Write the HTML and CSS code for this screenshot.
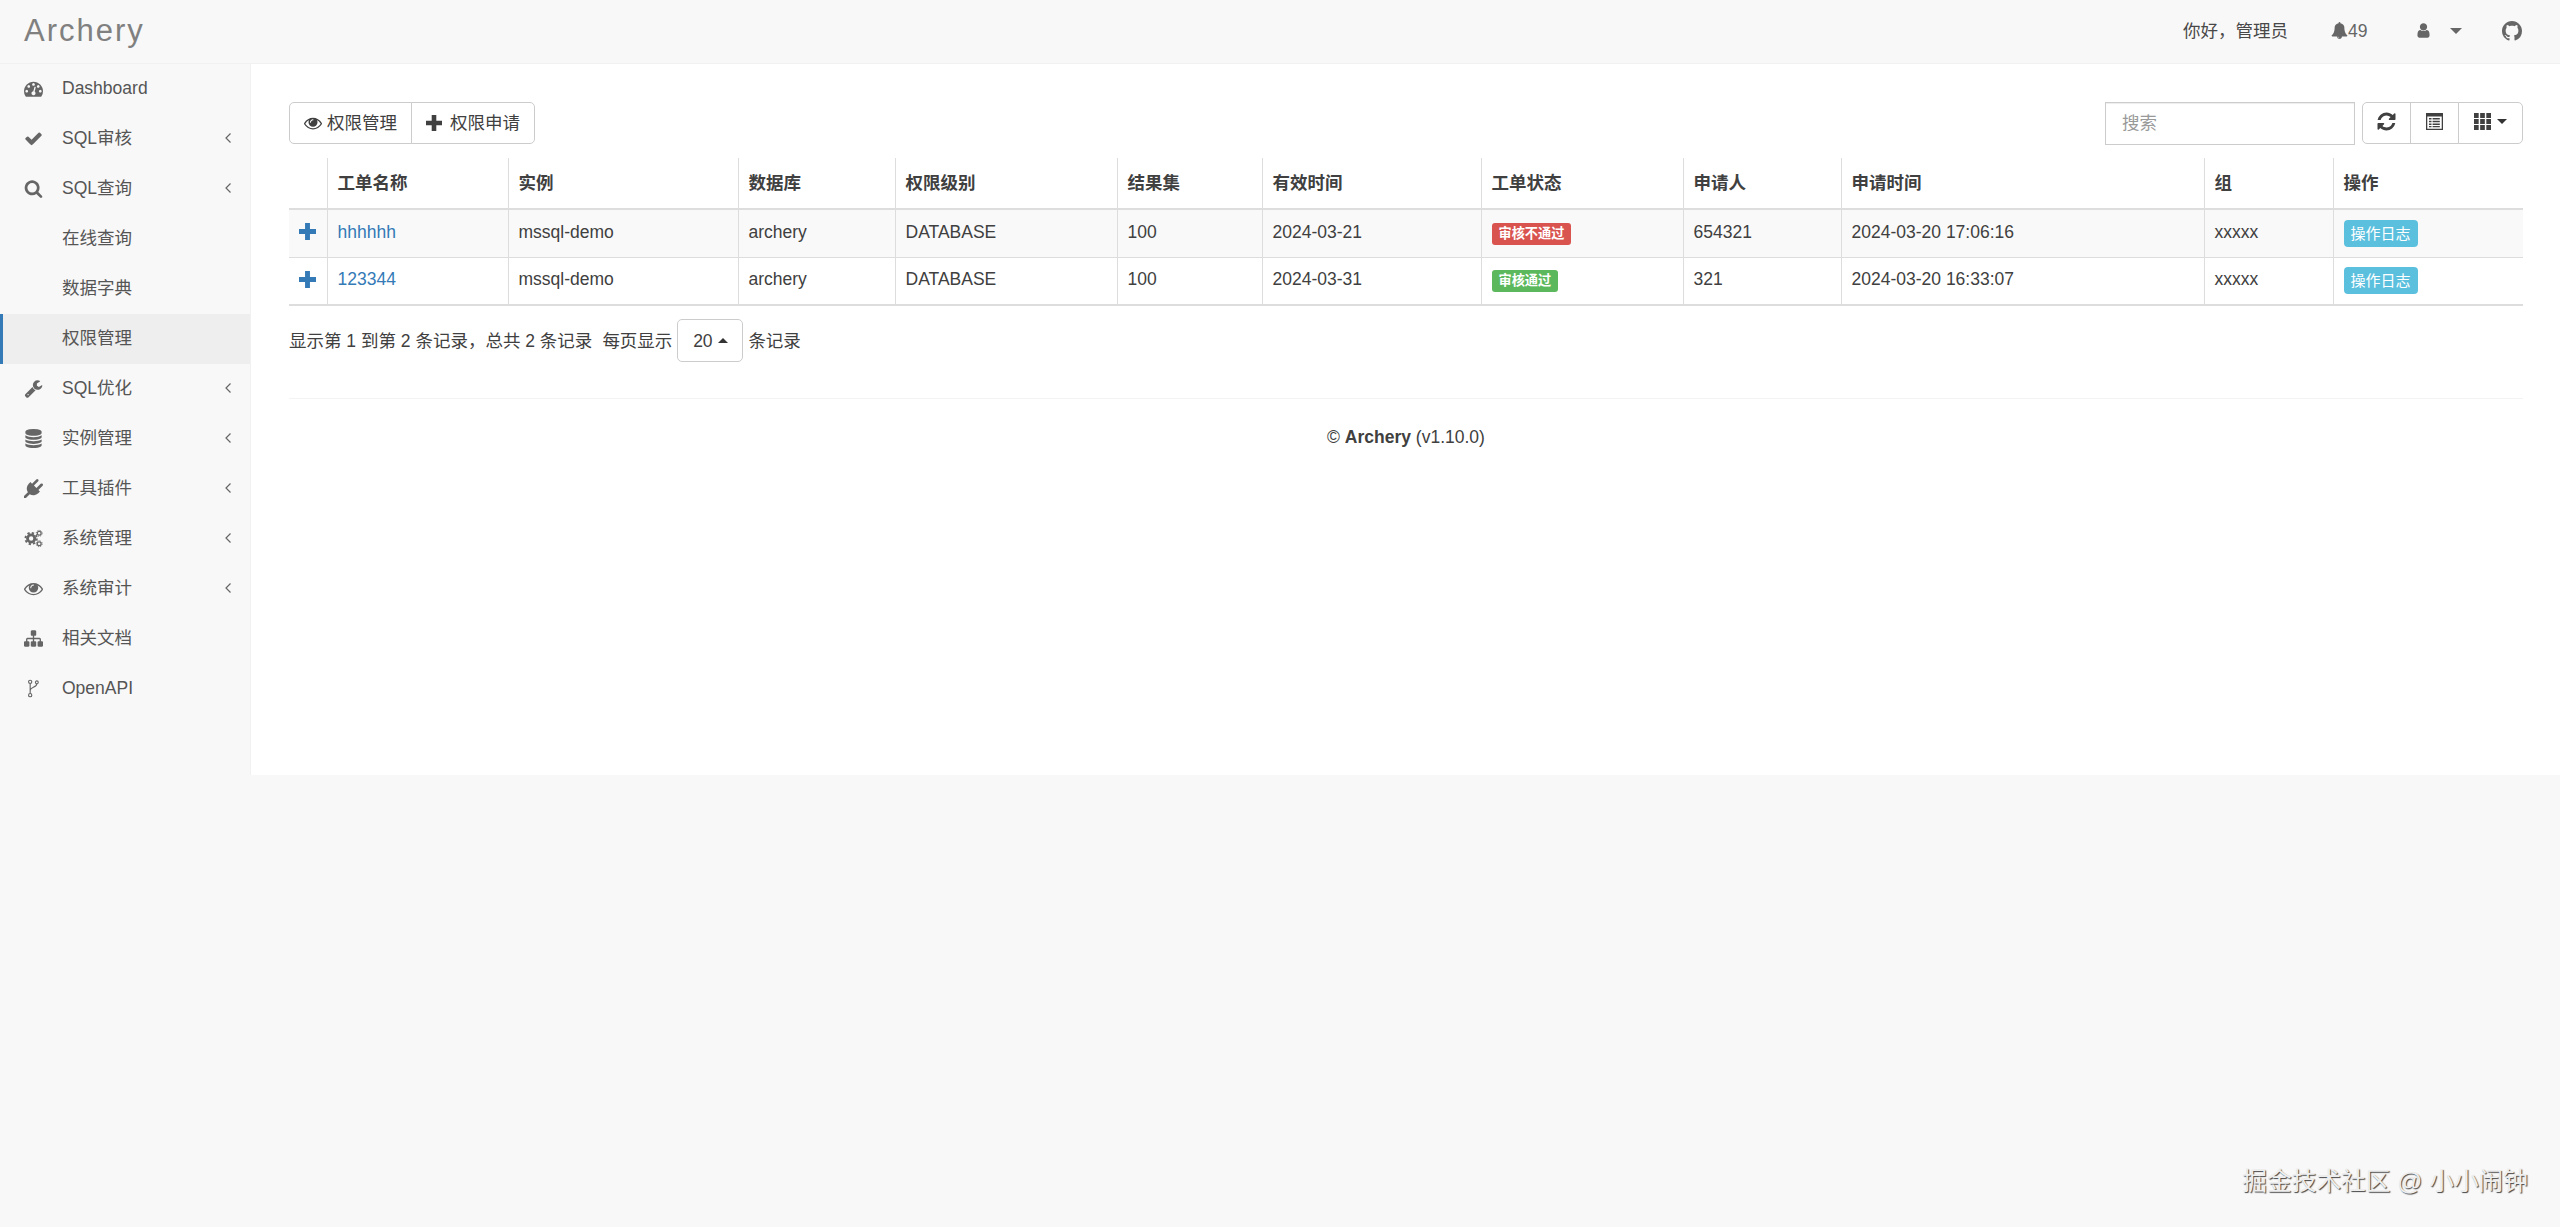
FILE: index.html
```html
<!DOCTYPE html>
<html lang="zh-CN">
<head>
  <meta charset="UTF-8">
  <title>Archery</title>
  <link rel="stylesheet" href="styles.css">
</head>
<body>
  <svg class="sprite" xmlns="http://www.w3.org/2000/svg">
    <symbol id="i-dashboard" viewBox="0 0 1792 1792"><path d="M384 1152q0-53-37.500-90.500t-90.500-37.500-90.500 37.500-37.500 90.500 37.500 90.500 90.500 37.500 90.500-37.500 37.500-90.500zm192-448q0-53-37.500-90.500t-90.500-37.500-90.500 37.500-37.500 90.500 37.500 90.500 90.500 37.500 90.500-37.500 37.500-90.500zm428 481l101-382q6-26-7.500-48.500t-38.500-29.500-48 6.500-30 39.500l-101 382q-60 5-107 43.500t-63 98.500q-20 77 20 146t117 89 146-20 89-117q16-60-6-117t-72-91zm660-33q0-53-37.500-90.500t-90.500-37.500-90.500 37.500-37.500 90.500 37.500 90.500 90.500 37.500 90.500-37.500 37.500-90.500zm-640-640q0-53-37.500-90.500t-90.500-37.500-90.500 37.500-37.500 90.500 37.500 90.500 90.500 37.500 90.500-37.500 37.500-90.500zm448 192q0-53-37.500-90.500t-90.500-37.500-90.500 37.500-37.500 90.500 37.500 90.500 90.500 37.500 90.500-37.500 37.500-90.500zm320 448q0 261-141 483-19 29-54 29h-1402q-35 0-54-29-141-221-141-483 0-182 71-348t191-286 286-191 348-71 348 71 286 191 191 286 71 348z"/></symbol>
    <symbol id="i-check" viewBox="0 0 1792 1792"><path d="M1671 566q0 40-28 68l-724 724-136 136q-28 28-68 28t-68-28l-136-136-362-362q-28-28-28-68t28-68l136-136q28-28 68-28t68 28l294 295 656-657q28-28 68-28t68 28l136 136q28 28 28 68z"/></symbol>
    <symbol id="i-search" viewBox="0 0 1792 1792"><path d="M1216 832q0-185-131.500-316.500t-316.500-131.500-316.500 131.500-131.500 316.500 131.500 316.500 316.500 131.500 316.500-131.500 131.500-316.500zm512 832q0 52-38 90t-90 38q-54 0-90-38l-343-342q-179 124-399 124-143 0-273.500-55.500t-225-150-150-225-55.500-273.500 55.500-273.500 150-225 225-150 273.500-55.500 273.500 55.500 225 150 150 225 55.500 273.500q0 220-124 399l343 343q37 37 37 90z"/></symbol>
    <symbol id="i-wrench" viewBox="0 0 1792 1792"><path d="M448 1472q0-26-19-45t-45-19-45 19-19 45 19 45 45 19 45-19 19-45zm644-420l-682 682q-37 37-90 37-52 0-91-37l-106-108q-38-36-38-90 0-53 38-91l681-681q39 98 114.500 173.500t173.500 114.500zm634-435q0 39-23 106-47 134-164.500 217.500t-258.500 83.500q-185 0-316.500-131.500t-131.500-316.500 131.500-316.500 316.500-131.500q58 0 121.500 16.500t107.500 46.500q16 11 16 28t-16 28l-293 169v224l193 107q5-3 79-48.500t135.500-81 70.500-35.500q15 0 23.500 10t8.500 25z"/></symbol>
    <symbol id="i-database" viewBox="0 0 1792 1792"><path d="M896 768q237 0 443-43t325-127v170q0 69-103 128t-280 93.500-385 34.500-385-34.500-280-93.500-103-128v-170q119 84 325 127t443 43zm0 768q237 0 443-43t325-127v170q0 69-103 128t-280 93.500-385 34.500-385-34.500-280-93.500-103-128v-170q119 84 325 127t443 43zm0-384q237 0 443-43t325-127v170q0 69-103 128t-280 93.500-385 34.500-385-34.500-280-93.500-103-128v-170q119 84 325 127t443 43zm0-1152q208 0 385 34.500t280 93.500 103 128v128q0 69-103 128t-280 93.500-385 34.500-385-34.500-280-93.500-103-128v-128q0-69 103-128t280-93.500 385-34.500z"/></symbol>
    <symbol id="i-plug" viewBox="0 0 1792 1792"><path d="M1755 453q37 38 37 90.500t-37 90.500l-401 400 150 150-160 160q-163 163-389.500 186.500t-411.500-100.500l-362 362h-181v-181l362-362q-124-185-100.500-411.500t186.500-389.500l160-160 150 150 400-401q38-37 91-37t90 37 37 90.500-37 90.500l-400 401 234 234 401-400q38-37 91-37t90 37z"/></symbol>
    <symbol id="i-gears" viewBox="0 0 20 20">
      <circle cx="7.500" cy="10" r="3.800" fill="none" stroke="currentColor" stroke-width="3"/>
      <circle cx="7.500" cy="10" r="6" fill="none" stroke="currentColor" stroke-width="2" stroke-dasharray="2.400 2.310"/>
      <circle cx="16" cy="4.500" r="2" fill="none" stroke="currentColor" stroke-width="1.300"/>
      <circle cx="16" cy="4.500" r="3.100" fill="none" stroke="currentColor" stroke-width="1" stroke-dasharray="1.300 1.130"/>
      <circle cx="16" cy="15.500" r="2" fill="none" stroke="currentColor" stroke-width="1.300"/>
      <circle cx="16" cy="15.500" r="3.100" fill="none" stroke="currentColor" stroke-width="1" stroke-dasharray="1.300 1.130"/>
    </symbol>
    <symbol id="i-eye" viewBox="0 0 1792 1792"><path d="M1664 960q-152-236-381-353 61 104 61 225 0 185-131.500 316.500t-316.500 131.500-316.500-131.500-131.500-316.500q0-121 61-225-229 117-381 353 133 205 333.500 326.500t434.500 121.500 434.500-121.500 333.500-326.500zm-720-384q0-20-14-34t-34-14q-125 0-214.500 89.500t-89.500 214.500q0 20 14 34t34 14 34-14 14-34q0-86 61-147t147-61q20 0 34-14t14-34zm848 384q0 34-20 69-140 230-376.500 368.500t-499.500 138.500-499.500-139-376.500-368q-20-35-20-69t20-69q140-229 376.500-368t499.500-139 499.500 139 376.500 368q20 35 20 69z"/></symbol>
    <symbol id="i-sitemap" viewBox="0 0 1792 1792"><path d="M1792 1248v320q0 40-28 68t-68 28h-320q-40 0-68-28t-28-68v-320q0-40 28-68t68-28h96v-192h-512v192h96q40 0 68 28t28 68v320q0 40-28 68t-68 28h-320q-40 0-68-28t-28-68v-320q0-40 28-68t68-28h96v-192h-512v192h96q40 0 68 28t28 68v320q0 40-28 68t-68 28h-320q-40 0-68-28t-28-68v-320q0-40 28-68t68-28h96v-192q0-52 38-90t90-38h512v-192h-96q-40 0-68-28t-28-68v-320q0-40 28-68t68-28h320q40 0 68 28t28 68v320q0 40-28 68t-68 28h-96v192h512q52 0 90 38t38 90v192h96q40 0 68 28t28 68z"/></symbol>
    <symbol id="i-fork" viewBox="0 0 20 20">
      <g fill="none" stroke="currentColor" stroke-width="1.200">
        <circle cx="6.500" cy="3" r="1.700"/>
        <circle cx="6.500" cy="17" r="1.700"/>
        <circle cx="13.500" cy="3.500" r="1.500"/>
        <path d="M6.500 4.700v10.600M13.500 5c0 4-7 3.500-7 7"/>
      </g>
    </symbol>
    <symbol id="i-chevron" viewBox="0 0 8 12"><path d="M6.500 1.500L2 6l4.500 4.500" fill="none" stroke="currentColor" stroke-width="1.200"/></symbol>
    <symbol id="i-bell" viewBox="0 0 1792 1792"><path d="M912 1696q0-16-16-16-59 0-101.500-42.500t-42.500-101.500q0-16-16-16t-16 16q0 73 51.500 124.500t124.500 51.500q16 0 16-16zm816-288q0 52-38 90t-90 38h-448q0 106-75 181t-181 75-181-75-75-181h-448q-52 0-90-38t-38-90q50-42 91-88t85-119.500 74.500-158.500 50-206 19.500-260q0-152 117-282.500t307-158.500q-8-19-8-39 0-40 28-68t68-28 68 28 28 68q0 20-8 39 190 28 307 158.500t117 282.500q0 139 19.500 260t50 206 74.500 158.500 85 119.500 91 88z"/></symbol>
    <symbol id="i-user" viewBox="0 0 1792 1792"><path d="M1536 1399q0 109-62.500 187t-150.500 78h-854q-88 0-150.500-78t-62.500-187q0-85 8.500-160.500t31.500-152 58.500-131 94-89 134.500-34.500q131 128 313 128t313-128q76 0 134.500 34.500t94 89 58.500 131 31.500 152 8.500 160.500zm-256-887q0 159-112.500 271.500t-271.500 112.500-271.500-112.500-112.500-271.500 112.500-271.500 271.500-112.500 271.500 112.500 112.500 271.500z"/></symbol>
    <symbol id="i-github" viewBox="0 0 16 16"><path d="M8 0C3.580 0 0 3.580 0 8c0 3.540 2.290 6.530 5.470 7.590.4.070.55-.17.55-.38 0-.19-.01-.82-.01-1.490-2.010.37-2.530-.49-2.690-.94-.09-.23-.48-.94-.82-1.130-.28-.15-.68-.52-.01-.53.63-.01 1.080.58 1.230.82.720 1.210 1.870.87 2.330.66.070-.52.280-.87.510-1.070-1.780-.2-3.640-.89-3.640-3.950 0-.87.310-1.590.820-2.150-.08-.2-.36-1.020.080-2.120 0 0 .67-.21 2.200.82.640-.18 1.320-.27 2-.27.68 0 1.360.09 2 .27 1.530-1.040 2.200-.82 2.200-.82.440 1.100.160 1.920.080 2.120.510.560.820 1.270.820 2.150 0 3.070-1.870 3.750-3.650 3.950.29.25.54.73.54 1.480 0 1.070-.01 1.930-.01 2.200 0 .21.15.46.55.38A8.013 8.013 0 0016 8c0-4.420-3.580-8-8-8z"/></symbol>
    <symbol id="i-plus" viewBox="0 0 16 16"><path d="M5.700 0h4.600v5.700H16v4.600h-5.700V16H5.700v-5.700H0V5.700h5.700z"/></symbol>
    <symbol id="i-refresh" viewBox="0 0 1792 1792"><path d="M1639 1056q0 5-1 7-64 268-268 434.500t-478 166.500q-146 0-282.500-55t-243.500-157l-129 129q-19 19-45 19t-45-19-19-45v-448q0-26 19-45t45-19h448q26 0 45 19t19 45-19 45l-137 137q71 66 161 102t187 36q134 0 250-65t186-179q11-17 53-117 8-23 30-23h192q13 0 22.500 9.500t9.500 22.500zm25-800v448q0 26-19 45t-45 19h-448q-26 0-45-19t-19-45 19-45l138-138q-148-137-349-137-134 0-250 65t-186 179q-11 17-53 117-8 23-30 23h-199q-13 0-22.500-9.500t-9.500-22.500v-7q65-268 270-434.500t480-166.500q146 0 284 55.500t245 156.500l130-129q19-19 45-19t45 19 19 45z"/></symbol>
    <symbol id="i-list" viewBox="0 0 16 16"><path fill-rule="evenodd" d="M0 0h16v16H0zM1.200 3.200v11.600h13.600V3.200zM2.800 4.700h2.400V6H2.800zm3.400 0H13V6H6.200zM2.800 7.300h2.400v1.300H2.800zm3.400 0H13v1.300H6.200zM2.800 9.900h2.400v1.300H2.800zm3.400 0H13v1.300H6.200zM2.800 12.300h2.400v1.200H2.800zm3.400 0H13v1.200H6.200z"/></symbol>
    <symbol id="i-grid" viewBox="0 0 16 16"><path d="M0 0h4.400v4.600H0zm5.800 0h4.400v4.600H5.800zm5.800 0H16v4.600h-4.400zM0 5.700h4.400v4.600H0zm5.800 0h4.400v4.600H5.800zm5.800 0H16v4.600h-4.400zM0 11.400h4.400V16H0zm5.800 0h4.400V16H5.800zm5.800 0H16V16h-4.400z"/></symbol>
  </svg>

  <nav class="navbar">
    <a class="brand">Archery</a>
    <div class="nav-right">
      <span class="hello">你好，管理员</span>
      <span class="nav-bell"><svg class="icon-bell"><use href="#i-bell"/></svg>49</span>
      <span class="nav-user"><svg class="icon-user"><use href="#i-user"/></svg><i class="caret"></i></span>
      <svg class="icon-github"><use href="#i-github"/></svg>
    </div>
  </nav>

  <div class="wrapper">
    <aside class="sidebar">
      <a class="menu-item"><svg class="menu-icon"><use href="#i-dashboard"/></svg>Dashboard</a>
      <a class="menu-item"><svg class="menu-icon"><use href="#i-check"/></svg>SQL审核<svg class="chevron"><use href="#i-chevron"/></svg></a>
      <a class="menu-item"><svg class="menu-icon"><use href="#i-search"/></svg>SQL查询<svg class="chevron"><use href="#i-chevron"/></svg></a>
      <a class="menu-item sub">在线查询</a>
      <a class="menu-item sub">数据字典</a>
      <a class="menu-item sub active">权限管理</a>
      <a class="menu-item"><svg class="menu-icon"><use href="#i-wrench"/></svg>SQL优化<svg class="chevron"><use href="#i-chevron"/></svg></a>
      <a class="menu-item"><svg class="menu-icon"><use href="#i-database"/></svg>实例管理<svg class="chevron"><use href="#i-chevron"/></svg></a>
      <a class="menu-item"><svg class="menu-icon"><use href="#i-plug"/></svg>工具插件<svg class="chevron"><use href="#i-chevron"/></svg></a>
      <a class="menu-item"><svg class="menu-icon"><use href="#i-gears"/></svg>系统管理<svg class="chevron"><use href="#i-chevron"/></svg></a>
      <a class="menu-item"><svg class="menu-icon"><use href="#i-eye"/></svg>系统审计<svg class="chevron"><use href="#i-chevron"/></svg></a>
      <a class="menu-item"><svg class="menu-icon"><use href="#i-sitemap"/></svg>相关文档</a>
      <a class="menu-item"><svg class="menu-icon"><use href="#i-fork"/></svg>OpenAPI</a>
    </aside>

    <main class="content">
      <div class="toolbar">
        <div class="btn-group">
          <button class="btn"><svg class="btn-icon"><use href="#i-eye"/></svg>权限管理</button>
          <button class="btn"><svg class="btn-icon plus-dark"><use href="#i-plus"/></svg>权限申请</button>
        </div>
        <div class="tools">
          <input class="search" type="text" placeholder="搜索">
          <div class="btn-group">
            <button class="btn btn-tool"><svg class="tool-icon refresh"><use href="#i-refresh"/></svg></button>
            <button class="btn btn-tool"><svg class="tool-icon"><use href="#i-list"/></svg></button>
            <button class="btn btn-tool wide"><svg class="tool-icon"><use href="#i-grid"/></svg><i class="caret small"></i></button>
          </div>
        </div>
      </div>

      <table class="data-table">
        <colgroup>
          <col class="c-expand"><col class="c-name"><col class="c-inst"><col class="c-db"><col class="c-level"><col class="c-limit"><col class="c-valid"><col class="c-status"><col class="c-user"><col class="c-time"><col class="c-group"><col>
        </colgroup>
        <thead>
          <tr>
            <th></th><th>工单名称</th><th>实例</th><th>数据库</th><th>权限级别</th><th>结果集</th><th>有效时间</th><th>工单状态</th><th>申请人</th><th>申请时间</th><th>组</th><th>操作</th>
          </tr>
        </thead>
        <tbody>
          <tr class="striped">
            <td><svg class="expand"><use href="#i-plus"/></svg></td>
            <td><a class="link">hhhhhh</a></td>
            <td>mssql-demo</td>
            <td>archery</td>
            <td>DATABASE</td>
            <td>100</td>
            <td>2024-03-21</td>
            <td><span class="label label-danger">审核不通过</span></td>
            <td>654321</td>
            <td>2024-03-20 17:06:16</td>
            <td>xxxxx</td>
            <td><span class="log-btn">操作日志</span></td>
          </tr>
          <tr>
            <td><svg class="expand"><use href="#i-plus"/></svg></td>
            <td><a class="link">123344</a></td>
            <td>mssql-demo</td>
            <td>archery</td>
            <td>DATABASE</td>
            <td>100</td>
            <td>2024-03-31</td>
            <td><span class="label label-success">审核通过</span></td>
            <td>321</td>
            <td>2024-03-20 16:33:07</td>
            <td>xxxxx</td>
            <td><span class="log-btn">操作日志</span></td>
          </tr>
        </tbody>
      </table>

      <div class="pagination">
        <span>显示第 1 到第 2 条记录，总共 2 条记录</span>
        <span class="per-page">每页显示</span>
        <span class="page-size">20<i class="caret small up"></i></span>
        <span>条记录</span>
      </div>

      <hr class="rule">
      <footer class="footer">© <b>Archery</b> (v1.10.0)</footer>
    </main>
  </div>

  <div class="watermark">掘金技术社区 @ 小小闹钟</div>
</body>
</html>
```

FILE: styles.css
```css
* {
  margin: 0;
  padding: 0;
  box-sizing: border-box;
}

body {
  font-family: "Liberation Sans", "Noto Sans CJK SC", sans-serif;
  font-size: 17.5px;
  line-height: 24px;
  color: #404040;
  background-color: #f8f8f8;
  height: 1227px;
  overflow: hidden;
  position: relative;
}

svg {
  fill: currentColor;
}

.sprite {
  display: none;
}

/* top bar */
.navbar {
  height: 64px;
  display: flex;
  justify-content: space-between;
  align-items: center;
  padding: 0 38px 2px 24px;
  border-bottom: 1px solid #f1f1f1;
}

.brand {
  font-size: 31px;
  letter-spacing: 2px;
  color: #808080;
}

.nav-right {
  display: flex;
  align-items: center;
  color: #555;
}

.hello {
  width: 148px;
  color: #484848;
}

.nav-bell {
  display: flex;
  align-items: center;
  width: 84px;
  color: #666;
}

.icon-bell {
  width: 17px;
  height: 17px;
}

.nav-user {
  display: flex;
  align-items: center;
  width: 87px;
  color: #666;
}

.icon-user {
  width: 17px;
  height: 17px;
  margin-right: 18px;
}

.icon-github {
  width: 20px;
  height: 20px;
  color: #666;
}

.caret {
  display: inline-block;
  width: 0;
  height: 0;
  border-top: 6px solid #666;
  border-left: 6px solid transparent;
  border-right: 6px solid transparent;
}

.caret.small {
  border-top-color: #333;
  border-top-width: 5px;
  border-left-width: 5px;
  border-right-width: 5px;
}

.caret.up {
  border-top: 0;
  border-bottom: 5px solid #333;
  margin-left: 5px;
}

/* side menu */
.wrapper {
  display: flex;
}

.sidebar {
  width: 251px;
  flex-shrink: 0;
  height: 711px;
  border-right: 1px solid #f1f1f1;
}

.menu-item {
  display: flex;
  align-items: center;
  height: 50px;
  padding: 0 18px 2px 24px;
  color: #555;
}

.menu-item.sub {
  padding-left: 62px;
}

.menu-item.active {
  background-color: #eee;
  border-left: 3px solid #337ab7;
  padding-left: 59px;
}

.menu-icon {
  width: 19px;
  height: 19px;
  margin-right: 19px;
  color: #666;
}

.chevron {
  width: 8px;
  height: 12px;
  margin-left: auto;
  color: #666;
}

/* main panel */
.content {
  flex: 1;
  height: 711px;
  background-color: #fff;
  padding: 38px 37px 0 38px;
}

.toolbar {
  display: flex;
  justify-content: space-between;
  align-items: flex-start;
  height: 56px;
}

.btn-group {
  display: flex;
}

.btn {
  display: flex;
  align-items: center;
  height: 42px;
  padding: 0 14px;
  font: inherit;
  color: #404040;
  background-color: #fff;
  border: 1px solid #ccc;
  margin-left: -1px;
}

.btn:first-child {
  margin-left: 0;
  border-radius: 5px 0 0 5px;
}

.btn:last-child {
  border-radius: 0 5px 5px 0;
}

.btn-icon {
  width: 18px;
  height: 18px;
  margin-right: 5px;
}

.btn-icon.plus-dark {
  width: 16px;
  height: 16px;
  margin-right: 8px;
}

.tools {
  display: flex;
  gap: 7px;
}

.search {
  width: 250px;
  height: 43px;
  padding: 0 16px;
  font: inherit;
  border: 1px solid #ccc;
  box-shadow: inset 0 1px 1px rgba(0, 0, 0, 0.075);
}

.search::placeholder {
  color: #999;
}

.btn-tool {
  width: 49px;
  justify-content: center;
  padding: 0 0 3px;
}

.btn-tool.wide {
  width: 65px;
  gap: 6px;
}

.tool-icon {
  width: 17px;
  height: 17px;
}

.tool-icon.refresh {
  width: 21px;
  height: 21px;
}

/* table */
.data-table {
  width: 100%;
  table-layout: fixed;
  border-collapse: collapse;
  border-bottom: 2px solid #ddd;
}

.c-expand { width: 38px; }
.c-name { width: 181px; }
.c-inst { width: 230px; }
.c-db { width: 157px; }
.c-level { width: 222px; }
.c-limit { width: 145px; }
.c-valid { width: 219px; }
.c-status { width: 202px; }
.c-user { width: 158px; }
.c-time { width: 363px; }
.c-group { width: 129px; }

.data-table th {
  height: 51px;
  padding: 0 10px;
  text-align: left;
  font-weight: bold;
  border-left: 1px solid #ddd;
  border-bottom: 2px solid #ddd;
}

.data-table td {
  height: 48px;
  padding: 0 10px 3px;
  border-left: 1px solid #ddd;
  border-bottom: 1px solid #ddd;
  white-space: nowrap;
}

.data-table th:first-child,
.data-table td:first-child {
  border-left: 0;
}

.striped {
  background-color: #f9f9f9;
}

.expand {
  display: block;
  width: 17px;
  height: 17px;
  color: #337ab7;
}

.link {
  color: #337ab7;
}

.label {
  display: inline-block;
  height: 22px;
  margin-top: 4px;
  padding: 0 7px;
  font-size: 13.200px;
  line-height: 22px;
  font-weight: bold;
  color: #fff;
  border-radius: 3px;
  vertical-align: middle;
}

.label-danger {
  background-color: #d9534f;
}

.label-success {
  background-color: #5cb85c;
}

.log-btn {
  display: inline-block;
  height: 27px;
  margin-top: 3px;
  padding: 0 7px;
  font-size: 15px;
  line-height: 27px;
  color: #fff;
  background-color: #5bc0de;
  border-radius: 4px;
  vertical-align: middle;
}

/* paging + footer */
.pagination {
  display: flex;
  align-items: center;
  margin-top: 13px;
  height: 43px;
}

.per-page {
  margin-left: 10px;
}

.page-size {
  display: flex;
  align-items: center;
  justify-content: center;
  width: 66px;
  height: 43px;
  margin: 0 5px;
  background-color: #fff;
  border: 1px solid #ccc;
  border-radius: 5px;
}

.rule {
  border: 0;
  border-top: 1px solid #f3f3f3;
  margin-top: 36px;
}

.footer {
  margin-top: 26px;
  text-align: center;
}

.watermark {
  position: absolute;
  right: 32px;
  bottom: 30px;
  font-size: 24.700px;
  line-height: 30px;
  color: #eee;
  text-shadow: 1px 1px 1px #444;
}
```
